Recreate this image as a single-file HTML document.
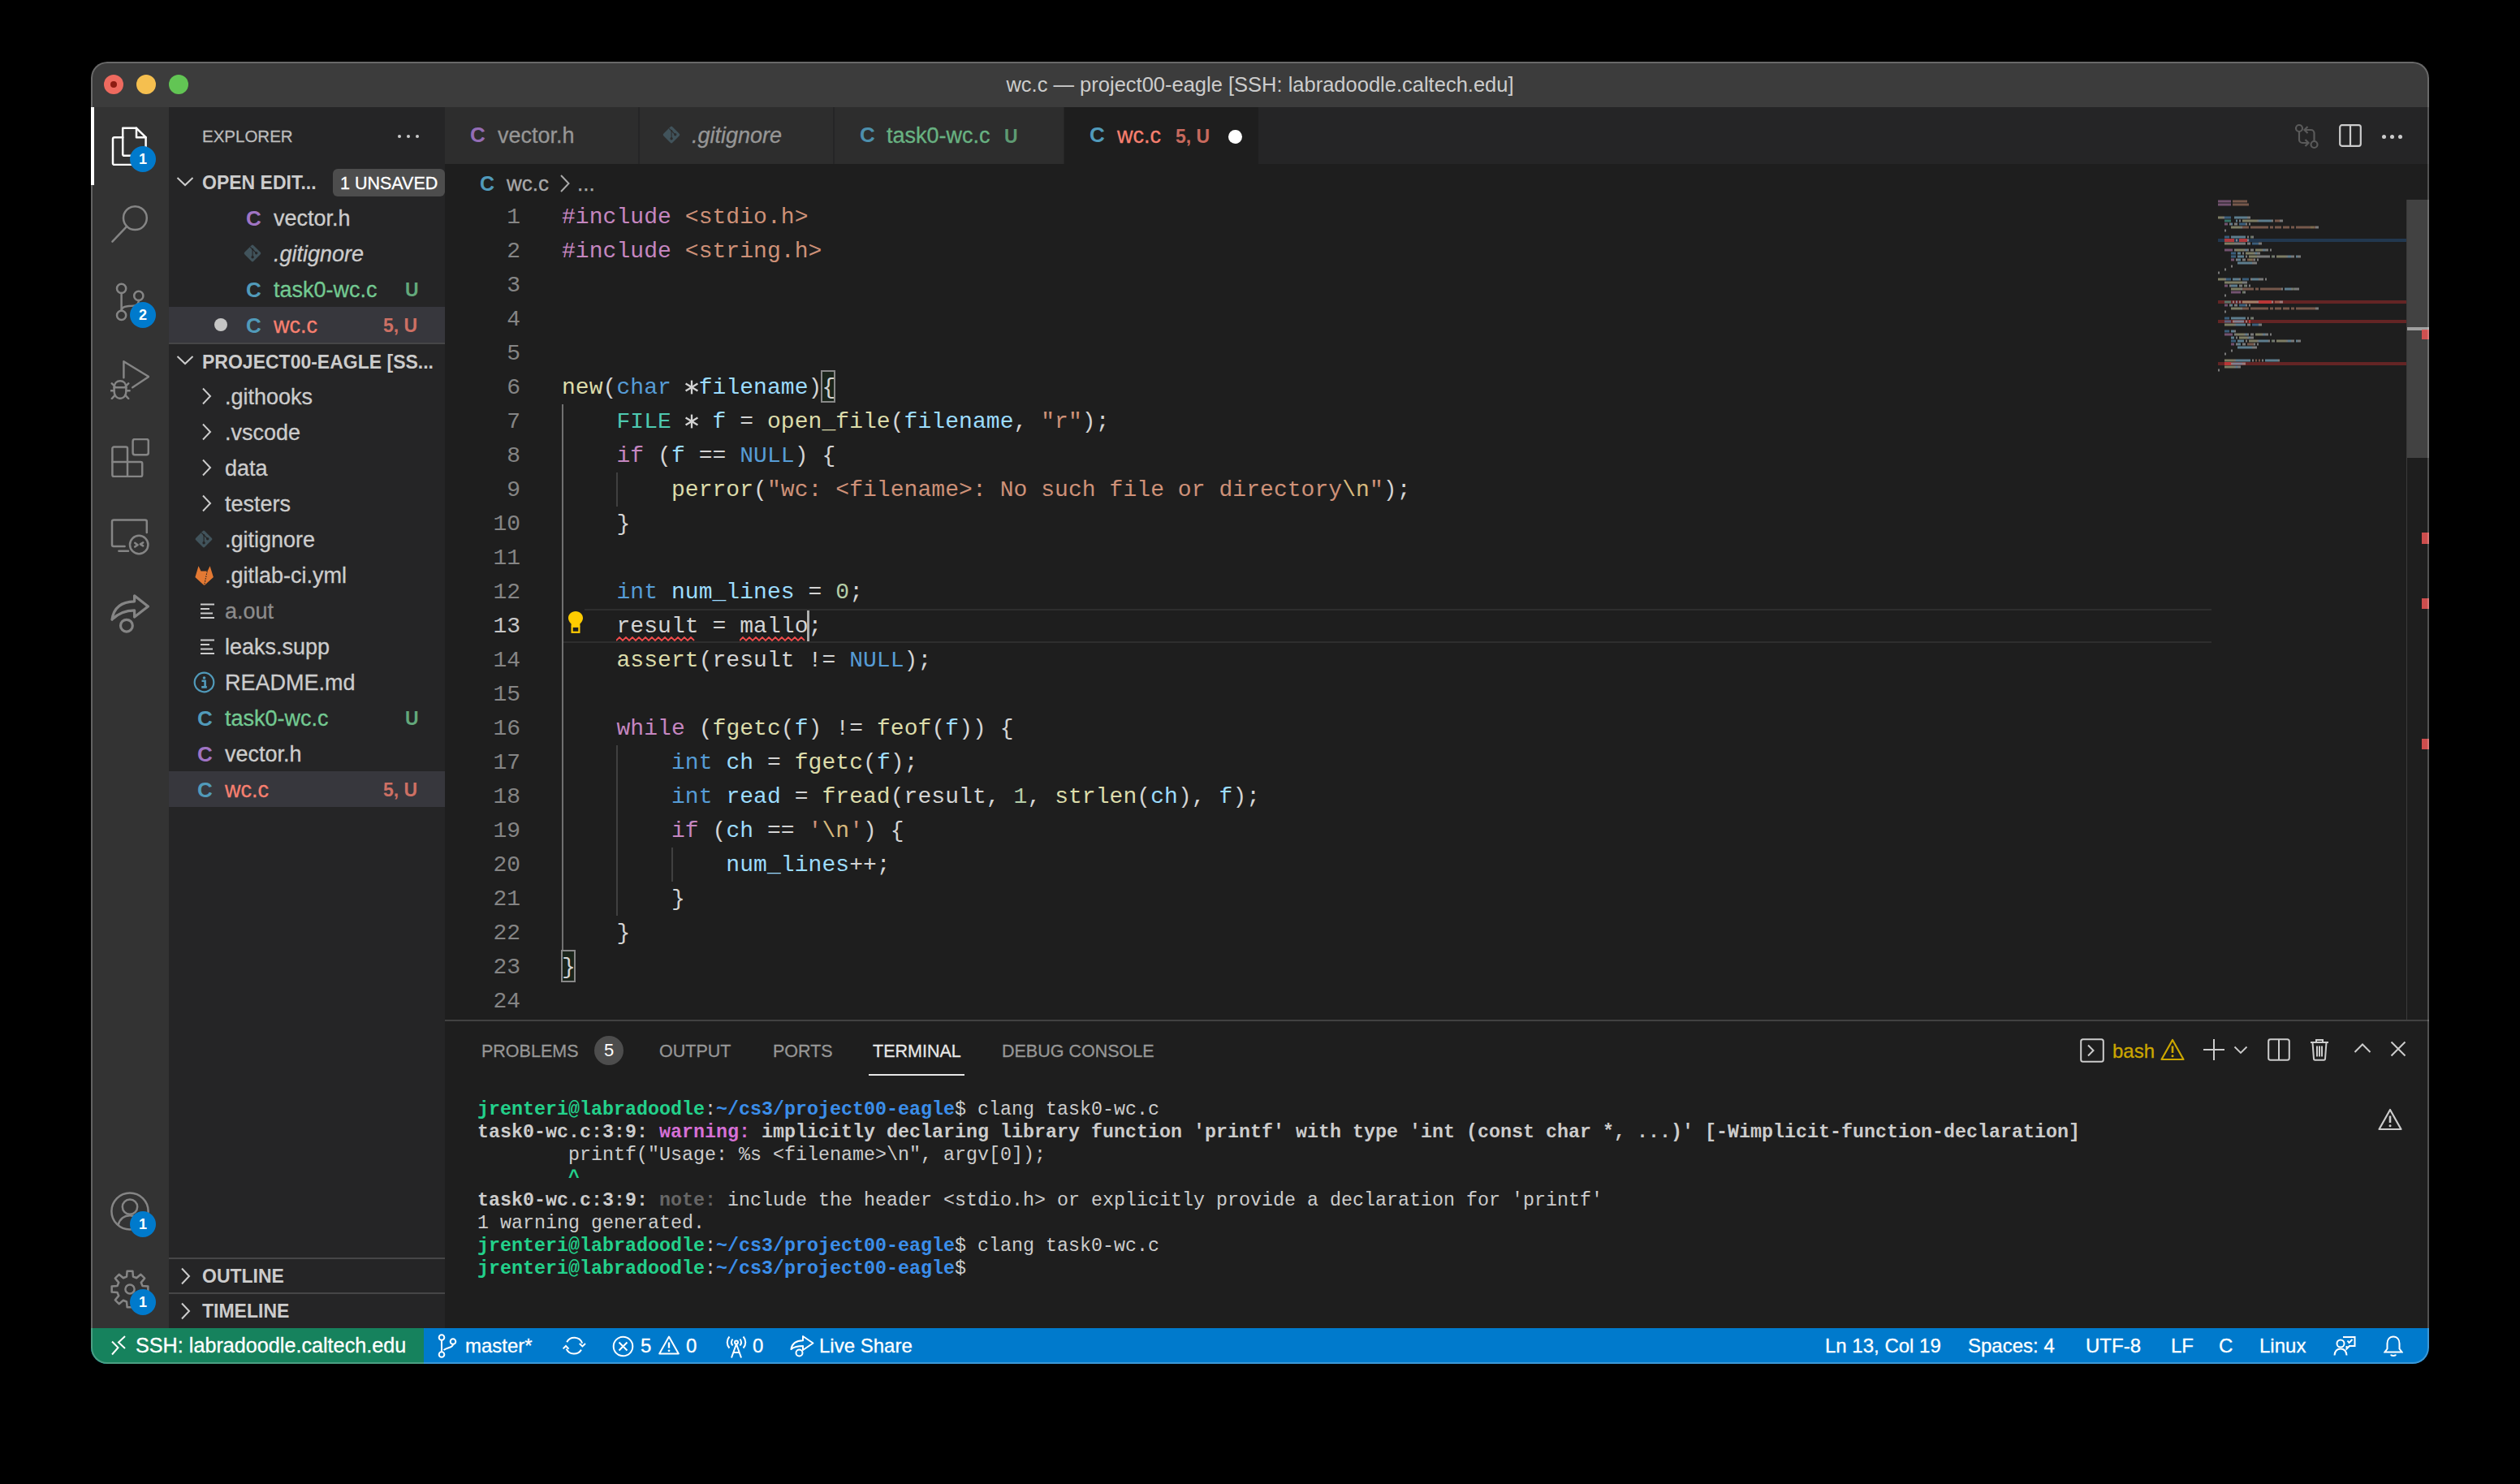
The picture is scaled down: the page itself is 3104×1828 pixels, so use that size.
<!DOCTYPE html>
<html><head><meta charset="utf-8"><title>VS Code</title>
<style>
html,body{margin:0;padding:0;background:#000;width:3104px;height:1828px;overflow:hidden;}
#win{position:absolute;left:0;top:0;width:3104px;height:1828px;clip-path:inset(76px 112px 148px 112px round 20px);}
</style></head><body>
<div id="win">
<div style="position:absolute;left:112px;top:76px;width:2880px;height:56px;background:#3c3c3c;"></div><div style="position:absolute;left:112px;top:132px;width:96px;height:1504px;background:#333333;"></div><div style="position:absolute;left:208px;top:132px;width:340px;height:1504px;background:#252526;"></div><div style="position:absolute;left:548px;top:132px;width:2444px;height:70px;background:#252526;"></div><div style="position:absolute;left:548px;top:202px;width:2444px;height:1054px;background:#1e1e1e;"></div><div style="position:absolute;left:548px;top:1256px;width:2444px;height:380px;background:#1e1e1e;"></div><div style="position:absolute;left:548px;top:1256px;width:2444px;height:2px;background:#414141;"></div><div style="position:absolute;left:112px;top:1636px;width:2880px;height:44px;background:#007acc;"></div><div style="position:absolute;left:112px;top:1636px;width:410px;height:44px;background:#16825d;"></div><div style="position:absolute;left:128px;top:92px;width:24px;height:24px;border-radius:50%;background:#ee6a5f;"></div><div style="position:absolute;left:168px;top:92px;width:24px;height:24px;border-radius:50%;background:#f5bf4f;"></div><div style="position:absolute;left:208px;top:92px;width:24px;height:24px;border-radius:50%;background:#62c554;"></div><div style="position:absolute;left:136px;top:100px;width:8px;height:8px;border-radius:50%;background:#8e1c12;"></div><div style="position:absolute;left:112px;top:76px;width:2880px;height:56px;text-align:center;font-family:'Liberation Sans', sans-serif;font-size:25.5px;line-height:56px;color:#cccccc;">wc.c — project00-eagle [SSH: labradoodle.caltech.edu]</div><div style="position:absolute;left:112px;top:76px;width:2880px;height:1604px;border-radius:20px;box-shadow:inset 0 0 0 2px rgba(255,255,255,0.23);z-index:50;pointer-events:none;"></div><div style="position:absolute;left:112px;top:132px;width:4px;height:96px;background:#ffffff;"></div><svg style="position:absolute;left:136px;top:156px;" width="48" height="48" viewBox="0 0 24 24"><g fill="none" stroke="#ffffff" stroke-width="1.25" stroke-linejoin="round" stroke-linecap="round"><path d="M7.6 0.9 H16 L21.8 6.6 V17 a0.9 0.9 0 0 1 -0.9 0.9 H8.5 a0.9 0.9 0 0 1 -0.9 -0.9 Z"/><path d="M16 0.9 V6.6 H21.8"/><path d="M7.6 6.6 H2.4 a0.9 0.9 0 0 0 -0.9 0.9 V22.6 a0.9 0.9 0 0 0 0.9 0.9 H14.6 a0.9 0.9 0 0 0 0.9 -0.9 V17.9"/></g></svg><svg style="position:absolute;left:136px;top:252px;" width="48" height="48" viewBox="0 0 24 24"><g fill="none" stroke="#858585" stroke-width="1.25" stroke-linejoin="round" stroke-linecap="round"><circle cx="15.2" cy="8.3" r="7.2"/><path d="M10.1 13.4 L1.2 22.8"/></g></svg><svg style="position:absolute;left:136px;top:348px;" width="48" height="48" viewBox="0 0 24 24"><g fill="none" stroke="#858585" stroke-width="1.25" stroke-linejoin="round" stroke-linecap="round"><circle cx="6.8" cy="3.7" r="2.8"/><circle cx="6.8" cy="20.2" r="2.8"/><circle cx="17.4" cy="8.2" r="2.8"/><path d="M6.8 6.5 V17.4"/><path d="M17.4 11 C17.4 14.6 14.5 14.4 10.5 14.6 C8.2 14.8 6.8 15.5 6.8 17.4"/></g></svg><svg style="position:absolute;left:136px;top:444px;" width="48" height="48" viewBox="0 0 24 24"><g fill="none" stroke="#858585" stroke-width="1.25" stroke-linejoin="round" stroke-linecap="round"><path d="M8.2 10.6 V0.6 L23.6 10 L13.6 16.6"/><path d="M2.3 16.8 C2.3 14 4 12.6 6 12.6 C8 12.6 9.7 14 9.7 16.8 V19 C9.7 21.8 8 23.4 6 23.4 C4 23.4 2.3 21.8 2.3 19 Z"/><path d="M2.3 16.6 H9.7 M0.2 18.6 H2.3 M9.7 18.6 H11.8 M0.9 14.2 L2.6 15.8 M11.1 14.2 L9.4 15.8 M0.9 23.5 L2.8 21.4 M11.1 23.5 L9.2 21.4"/></g></svg><svg style="position:absolute;left:136px;top:540px;" width="48" height="48" viewBox="0 0 24 24"><g fill="none" stroke="#858585" stroke-width="1.25" stroke-linejoin="round" stroke-linecap="round"><path d="M1.2 12.3 V6.3 a1 1 0 0 1 1 -1 H9.5 a1 1 0 0 1 1 1 V14.5 H18.6 a1 1 0 0 1 1 1 V22.5 a1 1 0 0 1 -1 1 H2.2 a1 1 0 0 1 -1 -1 Z"/><path d="M1.2 14.5 H10.5 V23.5"/><rect x="13.8" y="0.5" width="9.6" height="9.6" rx="1.2"/></g></svg><svg style="position:absolute;left:136px;top:636px;" width="48" height="48" viewBox="0 0 24 24"><g fill="none" stroke="#858585" stroke-width="1.25" stroke-linejoin="round" stroke-linecap="round"><path d="M8.8 18.5 H2 a1 1 0 0 1 -1 -1 V3.2 a1 1 0 0 1 1 -1 H21.4 a1 1 0 0 1 1 1 V10"/><path d="M5.2 21.4 H11"/><circle cx="17.6" cy="17.5" r="5.6"/><path d="M15.1 16.4 L16.8 17.6 L15.1 18.8 M20.1 16.2 L18.4 17.2 L20.1 18.2"/></g></svg><svg style="position:absolute;left:136px;top:732px;" width="48" height="48" viewBox="0 0 24 24"><g fill="none" stroke="#858585" stroke-width="1.25" stroke-linejoin="round" stroke-linecap="round"><g stroke-width="1.6"><path d="M1 15.6 C1.9 9 6 4.6 14.8 4.4 V0.9 L23.2 7.5 L14.8 14 V9.9 C8.5 9.9 4.6 11.8 1 15.6 Z"/><circle cx="9.95" cy="19.35" r="3.7"/></g></g></svg><svg style="position:absolute;left:136px;top:1468px;" width="48" height="48" viewBox="0 0 24 24"><g fill="none" stroke="#858585" stroke-width="1.25" stroke-linejoin="round" stroke-linecap="round"><circle cx="12" cy="12" r="11.3"/><circle cx="12" cy="9.3" r="4.6"/><path d="M4.8 20.4 C5.8 16.8 8.5 14.6 12 14.6 C15.5 14.6 18.2 16.8 19.2 20.4"/></g></svg><svg style="position:absolute;left:136px;top:1564px;" width="48" height="48" viewBox="0 0 24 24"><g fill="none" stroke="#858585" stroke-width="1.25" stroke-linejoin="round" stroke-linecap="round"><path d="M19.75 10.02 L23.17 10.31 L23.17 13.69 L19.75 13.98 L18.88 16.08 L21.09 18.71 L18.71 21.09 L16.08 18.88 L13.98 19.75 L13.69 23.17 L10.31 23.17 L10.02 19.75 L7.92 18.88 L5.29 21.09 L2.91 18.71 L5.12 16.08 L4.25 13.98 L0.83 13.69 L0.83 10.31 L4.25 10.02 L5.12 7.92 L2.91 5.29 L5.29 2.91 L7.92 5.12 L10.02 4.25 L10.31 0.83 L13.69 0.83 L13.98 4.25 L16.08 5.12 L18.71 2.91 L21.09 5.29 L18.88 7.92 Z"/><circle cx="12" cy="12" r="2.8"/></g></svg><div style="position:absolute;left:160px;top:180px;width:32px;height:32px;border-radius:50%;background:#007acc;color:#fff;font-family:'Liberation Sans', sans-serif;font-weight:bold;font-size:18px;line-height:32px;text-align:center;">1</div><div style="position:absolute;left:160px;top:372px;width:32px;height:32px;border-radius:50%;background:#007acc;color:#fff;font-family:'Liberation Sans', sans-serif;font-weight:bold;font-size:18px;line-height:32px;text-align:center;">2</div><div style="position:absolute;left:160px;top:1492px;width:32px;height:32px;border-radius:50%;background:#007acc;color:#fff;font-family:'Liberation Sans', sans-serif;font-weight:bold;font-size:18px;line-height:32px;text-align:center;">1</div><div style="position:absolute;left:160px;top:1588px;width:32px;height:32px;border-radius:50%;background:#007acc;color:#fff;font-family:'Liberation Sans', sans-serif;font-weight:bold;font-size:18px;line-height:32px;text-align:center;">1</div><div style="position:absolute;left:249px;top:150px;font-family:'Liberation Sans', sans-serif;font-size:20.5px;line-height:36px;color:#bbbbbb;font-weight:normal;white-space:pre;-webkit-text-stroke:0.3px currentColor;">EXPLORER</div><div style="position:absolute;left:490px;top:166px;width:4px;height:4px;border-radius:50%;background:#cccccc;"></div><div style="position:absolute;left:501px;top:166px;width:4px;height:4px;border-radius:50%;background:#cccccc;"></div><div style="position:absolute;left:512px;top:166px;width:4px;height:4px;border-radius:50%;background:#cccccc;"></div><svg style="position:absolute;left:217px;top:217px;" width="22" height="14" viewBox="0 0 22 14"><path d="M1.5 2 L11 11 L20.5 2" fill="none" stroke="#cccccc" stroke-width="2"/></svg><div style="position:absolute;left:249px;top:203px;font-family:'Liberation Sans', sans-serif;font-size:23px;line-height:44px;color:#cccccc;font-weight:bold;white-space:pre;">OPEN EDIT...</div><div style="position:absolute;left:410px;top:208px;width:138px;height:34px;border-radius:6px;background:#4d4d4d;"></div><div style="position:absolute;left:419px;top:209px;font-family:'Liberation Sans', sans-serif;font-size:21.5px;line-height:34px;color:#ffffff;font-weight:normal;white-space:pre;-webkit-text-stroke:0.3px currentColor;">1 UNSAVED</div><div style="position:absolute;left:303px;top:247px;font-family:'Liberation Sans', sans-serif;font-size:26px;line-height:44px;color:#a074c4;font-weight:bold;white-space:pre;">C</div><div style="position:absolute;left:337px;top:247px;font-family:'Liberation Sans', sans-serif;font-size:27px;line-height:44px;color:#cccccc;font-weight:normal;white-space:pre;-webkit-text-stroke:0.3px currentColor;">vector.h</div><svg style="position:absolute;left:299px;top:300px;" width="24" height="24" viewBox="0 0 24 24"><g transform="rotate(45 12 12)"><rect x="4.2" y="4.2" width="15.6" height="15.6" rx="1.8" fill="#41535b"/></g><path d="M9.2 4.3 L12.1 7 V16.8 M12.1 7 L16.7 11.8" stroke="#252526" stroke-width="1.1" fill="none"/><circle cx="12.1" cy="7" r="1.1" fill="#252526"/><circle cx="12.1" cy="16.8" r="1.7" fill="#252526"/><circle cx="16.7" cy="11.8" r="1.7" fill="#252526"/></svg><div style="position:absolute;left:337px;top:291px;font-family:'Liberation Sans', sans-serif;font-size:27px;line-height:44px;color:#cccccc;font-weight:normal;white-space:pre;-webkit-text-stroke:0.3px currentColor;font-style:italic;">.gitignore</div><div style="position:absolute;left:303px;top:335px;font-family:'Liberation Sans', sans-serif;font-size:26px;line-height:44px;color:#519aba;font-weight:bold;white-space:pre;">C</div><div style="position:absolute;left:337px;top:335px;font-family:'Liberation Sans', sans-serif;font-size:27px;line-height:44px;color:#73c991;font-weight:normal;white-space:pre;-webkit-text-stroke:0.3px currentColor;">task0-wc.c</div><div style="position:absolute;left:499px;top:335px;font-family:'Liberation Sans', sans-serif;font-size:23px;line-height:44px;color:#73c991;font-weight:bold;white-space:pre;opacity:0.8;">U</div><div style="position:absolute;left:208px;top:378px;width:340px;height:44px;background:#37373d;"></div><div style="position:absolute;left:264px;top:392px;width:16px;height:16px;border-radius:50%;background:#c5c5c5;"></div><div style="position:absolute;left:303px;top:379px;font-family:'Liberation Sans', sans-serif;font-size:26px;line-height:44px;color:#519aba;font-weight:bold;white-space:pre;">C</div><div style="position:absolute;left:337px;top:379px;font-family:'Liberation Sans', sans-serif;font-size:27px;line-height:44px;color:#f88070;font-weight:normal;white-space:pre;-webkit-text-stroke:0.3px currentColor;">wc.c</div><div style="position:absolute;left:472px;top:379px;font-family:'Liberation Sans', sans-serif;font-size:23px;line-height:44px;color:#f88070;font-weight:bold;white-space:pre;opacity:0.78;">5, U</div><div style="position:absolute;left:208px;top:422px;width:340px;height:2px;background:rgba(204,204,204,0.2);"></div><svg style="position:absolute;left:217px;top:437px;" width="22" height="14" viewBox="0 0 22 14"><path d="M1.5 2 L11 11 L20.5 2" fill="none" stroke="#cccccc" stroke-width="2"/></svg><div style="position:absolute;left:249px;top:423px;font-family:'Liberation Sans', sans-serif;font-size:23px;line-height:46px;color:#cccccc;font-weight:bold;white-space:pre;">PROJECT00-EAGLE [SS...</div><svg style="position:absolute;left:248px;top:477px;" width="14" height="22" viewBox="0 0 14 22"><path d="M2 1.5 L11 11 L2 20.5" fill="none" stroke="#cccccc" stroke-width="2"/></svg><div style="position:absolute;left:277px;top:467px;font-family:'Liberation Sans', sans-serif;font-size:27px;line-height:44px;color:#cccccc;font-weight:normal;white-space:pre;-webkit-text-stroke:0.3px currentColor;">.githooks</div><svg style="position:absolute;left:248px;top:521px;" width="14" height="22" viewBox="0 0 14 22"><path d="M2 1.5 L11 11 L2 20.5" fill="none" stroke="#cccccc" stroke-width="2"/></svg><div style="position:absolute;left:277px;top:511px;font-family:'Liberation Sans', sans-serif;font-size:27px;line-height:44px;color:#cccccc;font-weight:normal;white-space:pre;-webkit-text-stroke:0.3px currentColor;">.vscode</div><svg style="position:absolute;left:248px;top:565px;" width="14" height="22" viewBox="0 0 14 22"><path d="M2 1.5 L11 11 L2 20.5" fill="none" stroke="#cccccc" stroke-width="2"/></svg><div style="position:absolute;left:277px;top:555px;font-family:'Liberation Sans', sans-serif;font-size:27px;line-height:44px;color:#cccccc;font-weight:normal;white-space:pre;-webkit-text-stroke:0.3px currentColor;">data</div><svg style="position:absolute;left:248px;top:609px;" width="14" height="22" viewBox="0 0 14 22"><path d="M2 1.5 L11 11 L2 20.5" fill="none" stroke="#cccccc" stroke-width="2"/></svg><div style="position:absolute;left:277px;top:599px;font-family:'Liberation Sans', sans-serif;font-size:27px;line-height:44px;color:#cccccc;font-weight:normal;white-space:pre;-webkit-text-stroke:0.3px currentColor;">testers</div><svg style="position:absolute;left:239px;top:652px;" width="24" height="24" viewBox="0 0 24 24"><g transform="rotate(45 12 12)"><rect x="4.2" y="4.2" width="15.6" height="15.6" rx="1.8" fill="#41535b"/></g><path d="M9.2 4.3 L12.1 7 V16.8 M12.1 7 L16.7 11.8" stroke="#252526" stroke-width="1.1" fill="none"/><circle cx="12.1" cy="7" r="1.1" fill="#252526"/><circle cx="12.1" cy="16.8" r="1.7" fill="#252526"/><circle cx="16.7" cy="11.8" r="1.7" fill="#252526"/></svg><div style="position:absolute;left:277px;top:643px;font-family:'Liberation Sans', sans-serif;font-size:27px;line-height:44px;color:#cccccc;font-weight:normal;white-space:pre;-webkit-text-stroke:0.3px currentColor;">.gitignore</div><svg style="position:absolute;left:239px;top:697px;" width="26" height="26" viewBox="0 0 26 26"><path d="M1.4 14.1 L5.5 0.3 L8.5 6.4 H16.6 L19.6 0.3 L23.9 14.1 L12.6 24.2 Z" fill="#e37933"/><path d="M16.2 6.6 L12.6 24" stroke="#252526" stroke-width="1.1" stroke-dasharray="1.6 1.3"/></svg><div style="position:absolute;left:277px;top:687px;font-family:'Liberation Sans', sans-serif;font-size:27px;line-height:44px;color:#cccccc;font-weight:normal;white-space:pre;-webkit-text-stroke:0.3px currentColor;">.gitlab-ci.yml</div><svg style="position:absolute;left:246px;top:742px;" width="20" height="20" viewBox="0 0 20 20"><path d="M1 2.5 H18 M1 8 H12 M1 13.5 H16 M1 19 H18" stroke="#cccccc" stroke-width="2.2"/></svg><div style="position:absolute;left:277px;top:731px;font-family:'Liberation Sans', sans-serif;font-size:27px;line-height:44px;color:#8c8c8c;font-weight:normal;white-space:pre;-webkit-text-stroke:0.3px currentColor;">a.out</div><svg style="position:absolute;left:246px;top:786px;" width="20" height="20" viewBox="0 0 20 20"><path d="M1 2.5 H18 M1 8 H12 M1 13.5 H16 M1 19 H18" stroke="#cccccc" stroke-width="2.2"/></svg><div style="position:absolute;left:277px;top:775px;font-family:'Liberation Sans', sans-serif;font-size:27px;line-height:44px;color:#cccccc;font-weight:normal;white-space:pre;-webkit-text-stroke:0.3px currentColor;">leaks.supp</div><svg style="position:absolute;left:238px;top:827px;" width="27" height="27" viewBox="0 0 27 27"><circle cx="13.5" cy="13.5" r="11.8" fill="none" stroke="#519aba" stroke-width="2.2"/><circle cx="13.5" cy="8" r="1.8" fill="#519aba"/><path d="M10.5 11.8 H14.6 V18.8 M10.2 19.4 H16.8" stroke="#519aba" stroke-width="2.6" fill="none"/></svg><div style="position:absolute;left:277px;top:819px;font-family:'Liberation Sans', sans-serif;font-size:27px;line-height:44px;color:#cccccc;font-weight:normal;white-space:pre;-webkit-text-stroke:0.3px currentColor;">README.md</div><div style="position:absolute;left:243px;top:863px;font-family:'Liberation Sans', sans-serif;font-size:26px;line-height:44px;color:#519aba;font-weight:bold;white-space:pre;">C</div><div style="position:absolute;left:277px;top:863px;font-family:'Liberation Sans', sans-serif;font-size:27px;line-height:44px;color:#73c991;font-weight:normal;white-space:pre;-webkit-text-stroke:0.3px currentColor;">task0-wc.c</div><div style="position:absolute;left:499px;top:863px;font-family:'Liberation Sans', sans-serif;font-size:23px;line-height:44px;color:#73c991;font-weight:bold;white-space:pre;opacity:0.8;">U</div><div style="position:absolute;left:243px;top:907px;font-family:'Liberation Sans', sans-serif;font-size:26px;line-height:44px;color:#a074c4;font-weight:bold;white-space:pre;">C</div><div style="position:absolute;left:277px;top:907px;font-family:'Liberation Sans', sans-serif;font-size:27px;line-height:44px;color:#cccccc;font-weight:normal;white-space:pre;-webkit-text-stroke:0.3px currentColor;">vector.h</div><div style="position:absolute;left:208px;top:950px;width:340px;height:44px;background:#37373d;"></div><div style="position:absolute;left:243px;top:951px;font-family:'Liberation Sans', sans-serif;font-size:26px;line-height:44px;color:#519aba;font-weight:bold;white-space:pre;">C</div><div style="position:absolute;left:277px;top:951px;font-family:'Liberation Sans', sans-serif;font-size:27px;line-height:44px;color:#f88070;font-weight:normal;white-space:pre;-webkit-text-stroke:0.3px currentColor;">wc.c</div><div style="position:absolute;left:472px;top:951px;font-family:'Liberation Sans', sans-serif;font-size:23px;line-height:44px;color:#f88070;font-weight:bold;white-space:pre;opacity:0.78;">5, U</div><div style="position:absolute;left:208px;top:1549px;width:340px;height:2px;background:rgba(204,204,204,0.2);"></div><svg style="position:absolute;left:222px;top:1561px;" width="14" height="22" viewBox="0 0 14 22"><path d="M2 1.5 L11 11 L2 20.5" fill="none" stroke="#cccccc" stroke-width="2"/></svg><div style="position:absolute;left:249px;top:1551px;font-family:'Liberation Sans', sans-serif;font-size:23px;line-height:42px;color:#cccccc;font-weight:bold;white-space:pre;">OUTLINE</div><div style="position:absolute;left:208px;top:1592px;width:340px;height:2px;background:rgba(204,204,204,0.2);"></div><svg style="position:absolute;left:222px;top:1604px;" width="14" height="22" viewBox="0 0 14 22"><path d="M2 1.5 L11 11 L2 20.5" fill="none" stroke="#cccccc" stroke-width="2"/></svg><div style="position:absolute;left:249px;top:1594px;font-family:'Liberation Sans', sans-serif;font-size:23px;line-height:42px;color:#cccccc;font-weight:bold;white-space:pre;">TIMELINE</div><div style="position:absolute;left:548px;top:132px;width:238px;height:70px;background:#2d2d2d;"></div><div style="position:absolute;left:788px;top:132px;width:238px;height:70px;background:#2d2d2d;"></div><div style="position:absolute;left:1028px;top:132px;width:282px;height:70px;background:#2d2d2d;"></div><div style="position:absolute;left:1311px;top:132px;width:239px;height:70px;background:#1e1e1e;"></div><div style="position:absolute;left:579px;top:148px;font-family:'Liberation Sans', sans-serif;font-size:26px;line-height:36px;color:#a074c4;font-weight:bold;white-space:pre;opacity:0.9;">C</div><div style="position:absolute;left:613px;top:149px;font-family:'Liberation Sans', sans-serif;font-size:27px;line-height:36px;color:#969696;font-weight:normal;white-space:pre;-webkit-text-stroke:0.3px currentColor;">vector.h</div><svg style="position:absolute;left:815px;top:154px;" width="24" height="24" viewBox="0 0 24 24"><g transform="rotate(45 12 12)"><rect x="4.2" y="4.2" width="15.6" height="15.6" rx="1.8" fill="#41535b"/></g><path d="M9.2 4.3 L12.1 7 V16.8 M12.1 7 L16.7 11.8" stroke="#2d2d2d" stroke-width="1.1" fill="none"/><circle cx="12.1" cy="7" r="1.1" fill="#2d2d2d"/><circle cx="12.1" cy="16.8" r="1.7" fill="#2d2d2d"/><circle cx="16.7" cy="11.8" r="1.7" fill="#2d2d2d"/></svg><div style="position:absolute;left:852px;top:149px;font-family:'Liberation Sans', sans-serif;font-size:27px;line-height:36px;color:#969696;font-weight:normal;white-space:pre;-webkit-text-stroke:0.3px currentColor;font-style:italic;">.gitignore</div><div style="position:absolute;left:1059px;top:148px;font-family:'Liberation Sans', sans-serif;font-size:26px;line-height:36px;color:#519aba;font-weight:bold;white-space:pre;opacity:0.9;">C</div><div style="position:absolute;left:1092px;top:149px;font-family:'Liberation Sans', sans-serif;font-size:27px;line-height:36px;color:#73c991;font-weight:normal;white-space:pre;-webkit-text-stroke:0.3px currentColor;opacity:0.85;">task0-wc.c</div><div style="position:absolute;left:1237px;top:150px;font-family:'Liberation Sans', sans-serif;font-size:23px;line-height:36px;color:#73c991;font-weight:bold;white-space:pre;opacity:0.7;">U</div><div style="position:absolute;left:1342px;top:148px;font-family:'Liberation Sans', sans-serif;font-size:26px;line-height:36px;color:#519aba;font-weight:bold;white-space:pre;opacity:1.0;">C</div><div style="position:absolute;left:1376px;top:149px;font-family:'Liberation Sans', sans-serif;font-size:27px;line-height:36px;color:#f88070;font-weight:normal;white-space:pre;-webkit-text-stroke:0.3px currentColor;">wc.c</div><div style="position:absolute;left:1448px;top:150px;font-family:'Liberation Sans', sans-serif;font-size:23px;line-height:36px;color:#f88070;font-weight:bold;white-space:pre;opacity:0.78;">5, U</div><div style="position:absolute;left:1513px;top:160px;width:17px;height:17px;border-radius:50%;background:#ffffff;"></div><svg style="position:absolute;left:2826px;top:152px;" width="32" height="34" viewBox="0 0 32 34"><g fill="none" stroke="#5a5a5a" stroke-width="2.2"><circle cx="6" cy="6" r="4"/><circle cx="24.5" cy="26" r="4"/><path d="M6 10 V20 a4 4 0 0 0 4 4 H17 M13.5 20 L17.5 24 L13.5 28"/><path d="M24.5 22 V12 a4 4 0 0 0 -4 -4 H13 M16.5 4 L12.5 8 L16.5 12"/></g></svg><svg style="position:absolute;left:2881px;top:153px;" width="28" height="28" viewBox="0 0 28 28"><rect x="1.2" y="1.2" width="25.6" height="25.6" rx="2.5" fill="none" stroke="#cccccc" stroke-width="2.2"/><path d="M14 1.5 V26.5" stroke="#cccccc" stroke-width="2.2"/></svg><div style="position:absolute;left:2934px;top:166px;width:5px;height:5px;border-radius:50%;background:#cccccc;"></div><div style="position:absolute;left:2944px;top:166px;width:5px;height:5px;border-radius:50%;background:#cccccc;"></div><div style="position:absolute;left:2954px;top:166px;width:5px;height:5px;border-radius:50%;background:#cccccc;"></div><div style="position:absolute;left:591px;top:208px;font-family:'Liberation Sans', sans-serif;font-size:25px;line-height:36px;color:#519aba;font-weight:bold;white-space:pre;">C</div><div style="position:absolute;left:624px;top:208px;font-family:'Liberation Sans', sans-serif;font-size:26px;line-height:36px;color:#a9a9a9;font-weight:normal;white-space:pre;-webkit-text-stroke:0.3px currentColor;">wc.c</div><svg style="position:absolute;left:688px;top:214px;" width="16" height="24" viewBox="0 0 16 24"><path d="M3 2 L12.5 12 L3 22" fill="none" stroke="#a9a9a9" stroke-width="2"/></svg><div style="position:absolute;left:711px;top:208px;font-family:'Liberation Sans', sans-serif;font-size:26px;line-height:36px;color:#a9a9a9;font-weight:normal;white-space:pre;-webkit-text-stroke:0.3px currentColor;">...</div><div style="position:absolute;left:720px;top:750px;width:2004px;height:2px;background:#2e2e2e;"></div><div style="position:absolute;left:692px;top:790px;width:2032px;height:2px;background:#2e2e2e;"></div><div style="position:absolute;left:692px;top:498px;width:2px;height:672px;background:#707070;"></div><div style="position:absolute;left:759px;top:582px;width:2px;height:42px;background:#404040;"></div><div style="position:absolute;left:759px;top:918px;width:2px;height:210px;background:#404040;"></div><div style="position:absolute;left:827px;top:1044px;width:2px;height:42px;background:#404040;"></div><div style="position:absolute;left:1011px;top:456px;width:18px;height:40px;box-sizing:border-box;border:2px solid #888888;background:rgba(0,100,0,0.1);"></div><div style="position:absolute;left:691px;top:1170px;width:18px;height:40px;box-sizing:border-box;border:2px solid #888888;background:rgba(0,100,0,0.1);"></div><div style="position:absolute;left:560px;top:247px;width:81px;text-align:right;font-family:'Liberation Mono', monospace;font-size:28px;line-height:42px;color:#858585;white-space:pre;">1</div><div style="position:absolute;left:560px;top:289px;width:81px;text-align:right;font-family:'Liberation Mono', monospace;font-size:28px;line-height:42px;color:#858585;white-space:pre;">2</div><div style="position:absolute;left:560px;top:331px;width:81px;text-align:right;font-family:'Liberation Mono', monospace;font-size:28px;line-height:42px;color:#858585;white-space:pre;">3</div><div style="position:absolute;left:560px;top:373px;width:81px;text-align:right;font-family:'Liberation Mono', monospace;font-size:28px;line-height:42px;color:#858585;white-space:pre;">4</div><div style="position:absolute;left:560px;top:415px;width:81px;text-align:right;font-family:'Liberation Mono', monospace;font-size:28px;line-height:42px;color:#858585;white-space:pre;">5</div><div style="position:absolute;left:560px;top:457px;width:81px;text-align:right;font-family:'Liberation Mono', monospace;font-size:28px;line-height:42px;color:#858585;white-space:pre;">6</div><div style="position:absolute;left:560px;top:499px;width:81px;text-align:right;font-family:'Liberation Mono', monospace;font-size:28px;line-height:42px;color:#858585;white-space:pre;">7</div><div style="position:absolute;left:560px;top:541px;width:81px;text-align:right;font-family:'Liberation Mono', monospace;font-size:28px;line-height:42px;color:#858585;white-space:pre;">8</div><div style="position:absolute;left:560px;top:583px;width:81px;text-align:right;font-family:'Liberation Mono', monospace;font-size:28px;line-height:42px;color:#858585;white-space:pre;">9</div><div style="position:absolute;left:560px;top:625px;width:81px;text-align:right;font-family:'Liberation Mono', monospace;font-size:28px;line-height:42px;color:#858585;white-space:pre;">10</div><div style="position:absolute;left:560px;top:667px;width:81px;text-align:right;font-family:'Liberation Mono', monospace;font-size:28px;line-height:42px;color:#858585;white-space:pre;">11</div><div style="position:absolute;left:560px;top:709px;width:81px;text-align:right;font-family:'Liberation Mono', monospace;font-size:28px;line-height:42px;color:#858585;white-space:pre;">12</div><div style="position:absolute;left:560px;top:751px;width:81px;text-align:right;font-family:'Liberation Mono', monospace;font-size:28px;line-height:42px;color:#c6c6c6;white-space:pre;">13</div><div style="position:absolute;left:560px;top:793px;width:81px;text-align:right;font-family:'Liberation Mono', monospace;font-size:28px;line-height:42px;color:#858585;white-space:pre;">14</div><div style="position:absolute;left:560px;top:835px;width:81px;text-align:right;font-family:'Liberation Mono', monospace;font-size:28px;line-height:42px;color:#858585;white-space:pre;">15</div><div style="position:absolute;left:560px;top:877px;width:81px;text-align:right;font-family:'Liberation Mono', monospace;font-size:28px;line-height:42px;color:#858585;white-space:pre;">16</div><div style="position:absolute;left:560px;top:919px;width:81px;text-align:right;font-family:'Liberation Mono', monospace;font-size:28px;line-height:42px;color:#858585;white-space:pre;">17</div><div style="position:absolute;left:560px;top:961px;width:81px;text-align:right;font-family:'Liberation Mono', monospace;font-size:28px;line-height:42px;color:#858585;white-space:pre;">18</div><div style="position:absolute;left:560px;top:1003px;width:81px;text-align:right;font-family:'Liberation Mono', monospace;font-size:28px;line-height:42px;color:#858585;white-space:pre;">19</div><div style="position:absolute;left:560px;top:1045px;width:81px;text-align:right;font-family:'Liberation Mono', monospace;font-size:28px;line-height:42px;color:#858585;white-space:pre;">20</div><div style="position:absolute;left:560px;top:1087px;width:81px;text-align:right;font-family:'Liberation Mono', monospace;font-size:28px;line-height:42px;color:#858585;white-space:pre;">21</div><div style="position:absolute;left:560px;top:1129px;width:81px;text-align:right;font-family:'Liberation Mono', monospace;font-size:28px;line-height:42px;color:#858585;white-space:pre;">22</div><div style="position:absolute;left:560px;top:1171px;width:81px;text-align:right;font-family:'Liberation Mono', monospace;font-size:28px;line-height:42px;color:#858585;white-space:pre;">23</div><div style="position:absolute;left:560px;top:1213px;width:81px;text-align:right;font-family:'Liberation Mono', monospace;font-size:28px;line-height:42px;color:#858585;white-space:pre;">24</div><svg style="position:absolute;left:842px;top:467px;" width="20" height="20" viewBox="0 0 20 20"><g stroke="#d4d4d4" stroke-width="2.3" stroke-linecap="butt"><path d="M10 1.6 V18.4"/><path d="M2.6 5.6 L17.4 14.4"/><path d="M2.6 14.4 L17.4 5.6"/></g></svg><svg style="position:absolute;left:842px;top:509px;" width="20" height="20" viewBox="0 0 20 20"><g stroke="#d4d4d4" stroke-width="2.3" stroke-linecap="butt"><path d="M10 1.6 V18.4"/><path d="M2.6 5.6 L17.4 14.4"/><path d="M2.6 14.4 L17.4 5.6"/></g></svg><div style="position:absolute;left:692px;top:247px;font-family:'Liberation Mono', monospace;font-size:28px;letter-spacing:0.06px;line-height:42px;white-space:pre;"><span style="color:#c586c0">#include</span><span style="color:#d4d4d4"> </span><span style="color:#ce9178">&lt;stdio.h&gt;</span></div><div style="position:absolute;left:692px;top:289px;font-family:'Liberation Mono', monospace;font-size:28px;letter-spacing:0.06px;line-height:42px;white-space:pre;"><span style="color:#c586c0">#include</span><span style="color:#d4d4d4"> </span><span style="color:#ce9178">&lt;string.h&gt;</span></div><div style="position:absolute;left:692px;top:457px;font-family:'Liberation Mono', monospace;font-size:28px;letter-spacing:0.06px;line-height:42px;white-space:pre;"><span style="color:#dcdcaa">new</span><span style="color:#d4d4d4">(</span><span style="color:#569cd6">char</span><span style="color:#d4d4d4">  </span><span style="color:#9cdcfe">filename</span><span style="color:#d4d4d4">)</span><span style="color:#d4d4d4">{</span></div><div style="position:absolute;left:692px;top:499px;font-family:'Liberation Mono', monospace;font-size:28px;letter-spacing:0.06px;line-height:42px;white-space:pre;"><span style="color:#d4d4d4">    </span><span style="color:#4ec9b0">FILE</span><span style="color:#d4d4d4">   </span><span style="color:#9cdcfe">f</span><span style="color:#d4d4d4"> = </span><span style="color:#dcdcaa">open_file</span><span style="color:#d4d4d4">(</span><span style="color:#9cdcfe">filename</span><span style="color:#d4d4d4">, </span><span style="color:#ce9178">&quot;r&quot;</span><span style="color:#d4d4d4">);</span></div><div style="position:absolute;left:692px;top:541px;font-family:'Liberation Mono', monospace;font-size:28px;letter-spacing:0.06px;line-height:42px;white-space:pre;"><span style="color:#d4d4d4">    </span><span style="color:#c586c0">if</span><span style="color:#d4d4d4"> (</span><span style="color:#9cdcfe">f</span><span style="color:#d4d4d4"> == </span><span style="color:#569cd6">NULL</span><span style="color:#d4d4d4">) {</span></div><div style="position:absolute;left:692px;top:583px;font-family:'Liberation Mono', monospace;font-size:28px;letter-spacing:0.06px;line-height:42px;white-space:pre;"><span style="color:#d4d4d4">        </span><span style="color:#dcdcaa">perror</span><span style="color:#d4d4d4">(</span><span style="color:#ce9178">&quot;wc: &lt;filename&gt;: No such file or directory</span><span style="color:#d7ba7d">\n</span><span style="color:#ce9178">&quot;</span><span style="color:#d4d4d4">);</span></div><div style="position:absolute;left:692px;top:625px;font-family:'Liberation Mono', monospace;font-size:28px;letter-spacing:0.06px;line-height:42px;white-space:pre;"><span style="color:#d4d4d4">    }</span></div><div style="position:absolute;left:692px;top:709px;font-family:'Liberation Mono', monospace;font-size:28px;letter-spacing:0.06px;line-height:42px;white-space:pre;"><span style="color:#d4d4d4">    </span><span style="color:#569cd6">int</span><span style="color:#d4d4d4"> </span><span style="color:#9cdcfe">num_lines</span><span style="color:#d4d4d4"> = </span><span style="color:#b5cea8">0</span><span style="color:#d4d4d4">;</span></div><div style="position:absolute;left:692px;top:751px;font-family:'Liberation Mono', monospace;font-size:28px;letter-spacing:0.06px;line-height:42px;white-space:pre;"><span style="color:#d4d4d4">    result = mallo;</span></div><div style="position:absolute;left:692px;top:793px;font-family:'Liberation Mono', monospace;font-size:28px;letter-spacing:0.06px;line-height:42px;white-space:pre;"><span style="color:#d4d4d4">    </span><span style="color:#dcdcaa">assert</span><span style="color:#d4d4d4">(result != </span><span style="color:#569cd6">NULL</span><span style="color:#d4d4d4">);</span></div><div style="position:absolute;left:692px;top:877px;font-family:'Liberation Mono', monospace;font-size:28px;letter-spacing:0.06px;line-height:42px;white-space:pre;"><span style="color:#d4d4d4">    </span><span style="color:#c586c0">while</span><span style="color:#d4d4d4"> (</span><span style="color:#dcdcaa">fgetc</span><span style="color:#d4d4d4">(</span><span style="color:#9cdcfe">f</span><span style="color:#d4d4d4">) != </span><span style="color:#dcdcaa">feof</span><span style="color:#d4d4d4">(</span><span style="color:#9cdcfe">f</span><span style="color:#d4d4d4">)) {</span></div><div style="position:absolute;left:692px;top:919px;font-family:'Liberation Mono', monospace;font-size:28px;letter-spacing:0.06px;line-height:42px;white-space:pre;"><span style="color:#d4d4d4">        </span><span style="color:#569cd6">int</span><span style="color:#d4d4d4"> </span><span style="color:#9cdcfe">ch</span><span style="color:#d4d4d4"> = </span><span style="color:#dcdcaa">fgetc</span><span style="color:#d4d4d4">(</span><span style="color:#9cdcfe">f</span><span style="color:#d4d4d4">);</span></div><div style="position:absolute;left:692px;top:961px;font-family:'Liberation Mono', monospace;font-size:28px;letter-spacing:0.06px;line-height:42px;white-space:pre;"><span style="color:#d4d4d4">        </span><span style="color:#569cd6">int</span><span style="color:#d4d4d4"> </span><span style="color:#9cdcfe">read</span><span style="color:#d4d4d4"> = </span><span style="color:#dcdcaa">fread</span><span style="color:#d4d4d4">(result, </span><span style="color:#b5cea8">1</span><span style="color:#d4d4d4">, </span><span style="color:#dcdcaa">strlen</span><span style="color:#d4d4d4">(</span><span style="color:#9cdcfe">ch</span><span style="color:#d4d4d4">), </span><span style="color:#9cdcfe">f</span><span style="color:#d4d4d4">);</span></div><div style="position:absolute;left:692px;top:1003px;font-family:'Liberation Mono', monospace;font-size:28px;letter-spacing:0.06px;line-height:42px;white-space:pre;"><span style="color:#d4d4d4">        </span><span style="color:#c586c0">if</span><span style="color:#d4d4d4"> (</span><span style="color:#9cdcfe">ch</span><span style="color:#d4d4d4"> == </span><span style="color:#ce9178">&#x27;</span><span style="color:#d7ba7d">\n</span><span style="color:#ce9178">&#x27;</span><span style="color:#d4d4d4">) {</span></div><div style="position:absolute;left:692px;top:1045px;font-family:'Liberation Mono', monospace;font-size:28px;letter-spacing:0.06px;line-height:42px;white-space:pre;"><span style="color:#d4d4d4">            </span><span style="color:#9cdcfe">num_lines</span><span style="color:#d4d4d4">++;</span></div><div style="position:absolute;left:692px;top:1087px;font-family:'Liberation Mono', monospace;font-size:28px;letter-spacing:0.06px;line-height:42px;white-space:pre;"><span style="color:#d4d4d4">        }</span></div><div style="position:absolute;left:692px;top:1129px;font-family:'Liberation Mono', monospace;font-size:28px;letter-spacing:0.06px;line-height:42px;white-space:pre;"><span style="color:#d4d4d4">    }</span></div><div style="position:absolute;left:692px;top:1171px;font-family:'Liberation Mono', monospace;font-size:28px;letter-spacing:0.06px;line-height:42px;white-space:pre;"><span style="color:#d4d4d4">}</span></div><svg style="position:absolute;left:759px;top:784px;" width="102" height="8" viewBox="0 0 102 8"><path d="M0 5 l4 -4 l4 4 l4 -4 l4 4 l4 -4 l4 4 l4 -4 l4 4 l4 -4 l4 4 l4 -4 l4 4 l4 -4 l4 4 l4 -4 l4 4 l4 -4 l4 4 l4 -4 l4 4 l4 -4 l4 4 l4 -4 l4 4" fill="none" stroke="#f14c4c" stroke-width="1.8"/></svg><svg style="position:absolute;left:911px;top:784px;" width="84" height="8" viewBox="0 0 84 8"><path d="M0 5 l4 -4 l4 4 l4 -4 l4 4 l4 -4 l4 4 l4 -4 l4 4 l4 -4 l4 4 l4 -4 l4 4 l4 -4 l4 4 l4 -4 l4 4 l4 -4 l4 4 l4 -4 l4 4" fill="none" stroke="#f14c4c" stroke-width="1.8"/></svg><div style="position:absolute;left:994px;top:752px;width:3px;height:38px;background:#aeafad;"></div><svg style="position:absolute;left:699px;top:752px;" width="20" height="28" viewBox="0 0 20 28"><path d="M10 1 C4.8 1 1 4.8 1 9.3 C1 12.6 3 14.6 4.6 16.6 V19.5 H15.4 V16.6 C17 14.6 19 12.6 19 9.3 C19 4.8 15.2 1 10 1 Z" fill="#ffcc00"/><rect x="5.6" y="19.8" width="8.8" height="7" fill="none" stroke="#ffcc00" stroke-width="2.2"/></svg><div style="position:absolute;left:2732px;top:294px;width:232px;height:4px;background:#264f78;opacity:0.55;"></div><div style="position:absolute;left:2732px;top:370px;width:232px;height:4px;background:#8b2a2a;opacity:0.65;"></div><div style="position:absolute;left:2732px;top:394px;width:232px;height:4px;background:#8b2a2a;opacity:0.65;"></div><div style="position:absolute;left:2732px;top:446px;width:232px;height:4px;background:#8b2a2a;opacity:0.65;"></div><svg style="position:absolute;left:2732px;top:246px;" width="232" height="220" viewBox="0 0 232 220"><rect x="0" y="0.5" width="16" height="3" fill="#c586c0" opacity="0.5"/><rect x="18" y="0.5" width="18" height="3" fill="#ce9178" opacity="0.5"/><rect x="0" y="4.5" width="16" height="3" fill="#c586c0" opacity="0.5"/><rect x="18" y="4.5" width="20" height="3" fill="#ce9178" opacity="0.5"/><rect x="0" y="20.5" width="6" height="3" fill="#dcdcaa" opacity="0.5"/><rect x="6" y="20.5" width="2" height="3" fill="#d4d4d4" opacity="0.5"/><rect x="8" y="20.5" width="8" height="3" fill="#569cd6" opacity="0.5"/><rect x="20" y="20.5" width="16" height="3" fill="#9cdcfe" opacity="0.5"/><rect x="36" y="20.5" width="2" height="3" fill="#d4d4d4" opacity="0.5"/><rect x="38" y="20.5" width="2" height="3" fill="#d4d4d4" opacity="0.5"/><rect x="8" y="24.5" width="8" height="3" fill="#4ec9b0" opacity="0.5"/><rect x="22" y="24.5" width="2" height="3" fill="#9cdcfe" opacity="0.5"/><rect x="26" y="24.5" width="2" height="3" fill="#d4d4d4" opacity="0.5"/><rect x="30" y="24.5" width="18" height="3" fill="#dcdcaa" opacity="0.5"/><rect x="48" y="24.5" width="2" height="3" fill="#d4d4d4" opacity="0.5"/><rect x="50" y="24.5" width="16" height="3" fill="#9cdcfe" opacity="0.5"/><rect x="66" y="24.5" width="2" height="3" fill="#d4d4d4" opacity="0.5"/><rect x="70" y="24.5" width="6" height="3" fill="#ce9178" opacity="0.5"/><rect x="76" y="24.5" width="4" height="3" fill="#d4d4d4" opacity="0.5"/><rect x="8" y="28.5" width="4" height="3" fill="#c586c0" opacity="0.5"/><rect x="14" y="28.5" width="2" height="3" fill="#d4d4d4" opacity="0.5"/><rect x="16" y="28.5" width="2" height="3" fill="#9cdcfe" opacity="0.5"/><rect x="20" y="28.5" width="4" height="3" fill="#d4d4d4" opacity="0.5"/><rect x="26" y="28.5" width="8" height="3" fill="#569cd6" opacity="0.5"/><rect x="34" y="28.5" width="2" height="3" fill="#d4d4d4" opacity="0.5"/><rect x="38" y="28.5" width="2" height="3" fill="#d4d4d4" opacity="0.5"/><rect x="16" y="32.5" width="12" height="3" fill="#dcdcaa" opacity="0.5"/><rect x="28" y="32.5" width="2" height="3" fill="#d4d4d4" opacity="0.5"/><rect x="30" y="32.5" width="8" height="3" fill="#ce9178" opacity="0.5"/><rect x="40" y="32.5" width="22" height="3" fill="#ce9178" opacity="0.5"/><rect x="64" y="32.5" width="4" height="3" fill="#ce9178" opacity="0.5"/><rect x="70" y="32.5" width="8" height="3" fill="#ce9178" opacity="0.5"/><rect x="80" y="32.5" width="8" height="3" fill="#ce9178" opacity="0.5"/><rect x="90" y="32.5" width="4" height="3" fill="#ce9178" opacity="0.5"/><rect x="96" y="32.5" width="18" height="3" fill="#ce9178" opacity="0.5"/><rect x="114" y="32.5" width="4" height="3" fill="#d7ba7d" opacity="0.5"/><rect x="118" y="32.5" width="2" height="3" fill="#ce9178" opacity="0.5"/><rect x="120" y="32.5" width="4" height="3" fill="#d4d4d4" opacity="0.5"/><rect x="8" y="36.5" width="2" height="3" fill="#d4d4d4" opacity="0.5"/><rect x="8" y="44.5" width="6" height="3" fill="#569cd6" opacity="0.5"/><rect x="16" y="44.5" width="18" height="3" fill="#9cdcfe" opacity="0.5"/><rect x="36" y="44.5" width="2" height="3" fill="#d4d4d4" opacity="0.5"/><rect x="40" y="44.5" width="2" height="3" fill="#b5cea8" opacity="0.5"/><rect x="42" y="44.5" width="2" height="3" fill="#d4d4d4" opacity="0.5"/><rect x="8" y="48" width="12" height="4" fill="#c93a3a" opacity="0.85"/><rect x="22" y="48.5" width="2" height="3" fill="#d4d4d4" opacity="0.5"/><rect x="26" y="48" width="10" height="4" fill="#c93a3a" opacity="0.85"/><rect x="36" y="48.5" width="2" height="3" fill="#d4d4d4" opacity="0.5"/><rect x="8" y="52.5" width="12" height="3" fill="#dcdcaa" opacity="0.5"/><rect x="20" y="52.5" width="14" height="3" fill="#d4d4d4" opacity="0.5"/><rect x="36" y="52.5" width="4" height="3" fill="#d4d4d4" opacity="0.5"/><rect x="42" y="52.5" width="8" height="3" fill="#569cd6" opacity="0.5"/><rect x="50" y="52.5" width="4" height="3" fill="#d4d4d4" opacity="0.5"/><rect x="8" y="60.5" width="10" height="3" fill="#c586c0" opacity="0.5"/><rect x="20" y="60.5" width="2" height="3" fill="#d4d4d4" opacity="0.5"/><rect x="22" y="60.5" width="10" height="3" fill="#dcdcaa" opacity="0.5"/><rect x="32" y="60.5" width="2" height="3" fill="#d4d4d4" opacity="0.5"/><rect x="34" y="60.5" width="2" height="3" fill="#9cdcfe" opacity="0.5"/><rect x="36" y="60.5" width="2" height="3" fill="#d4d4d4" opacity="0.5"/><rect x="40" y="60.5" width="4" height="3" fill="#d4d4d4" opacity="0.5"/><rect x="46" y="60.5" width="8" height="3" fill="#dcdcaa" opacity="0.5"/><rect x="54" y="60.5" width="2" height="3" fill="#d4d4d4" opacity="0.5"/><rect x="56" y="60.5" width="2" height="3" fill="#9cdcfe" opacity="0.5"/><rect x="58" y="60.5" width="4" height="3" fill="#d4d4d4" opacity="0.5"/><rect x="64" y="60.5" width="2" height="3" fill="#d4d4d4" opacity="0.5"/><rect x="16" y="64.5" width="6" height="3" fill="#569cd6" opacity="0.5"/><rect x="24" y="64.5" width="4" height="3" fill="#9cdcfe" opacity="0.5"/><rect x="30" y="64.5" width="2" height="3" fill="#d4d4d4" opacity="0.5"/><rect x="34" y="64.5" width="10" height="3" fill="#dcdcaa" opacity="0.5"/><rect x="44" y="64.5" width="2" height="3" fill="#d4d4d4" opacity="0.5"/><rect x="46" y="64.5" width="2" height="3" fill="#9cdcfe" opacity="0.5"/><rect x="48" y="64.5" width="4" height="3" fill="#d4d4d4" opacity="0.5"/><rect x="16" y="68.5" width="6" height="3" fill="#569cd6" opacity="0.5"/><rect x="24" y="68.5" width="8" height="3" fill="#9cdcfe" opacity="0.5"/><rect x="34" y="68.5" width="2" height="3" fill="#d4d4d4" opacity="0.5"/><rect x="38" y="68.5" width="10" height="3" fill="#dcdcaa" opacity="0.5"/><rect x="48" y="68.5" width="16" height="3" fill="#d4d4d4" opacity="0.5"/><rect x="66" y="68.5" width="2" height="3" fill="#b5cea8" opacity="0.5"/><rect x="68" y="68.5" width="2" height="3" fill="#d4d4d4" opacity="0.5"/><rect x="72" y="68.5" width="12" height="3" fill="#dcdcaa" opacity="0.5"/><rect x="84" y="68.5" width="2" height="3" fill="#d4d4d4" opacity="0.5"/><rect x="86" y="68.5" width="4" height="3" fill="#9cdcfe" opacity="0.5"/><rect x="90" y="68.5" width="4" height="3" fill="#d4d4d4" opacity="0.5"/><rect x="96" y="68.5" width="2" height="3" fill="#9cdcfe" opacity="0.5"/><rect x="98" y="68.5" width="4" height="3" fill="#d4d4d4" opacity="0.5"/><rect x="16" y="72.5" width="4" height="3" fill="#c586c0" opacity="0.5"/><rect x="22" y="72.5" width="2" height="3" fill="#d4d4d4" opacity="0.5"/><rect x="24" y="72.5" width="4" height="3" fill="#9cdcfe" opacity="0.5"/><rect x="30" y="72.5" width="4" height="3" fill="#d4d4d4" opacity="0.5"/><rect x="36" y="72.5" width="2" height="3" fill="#ce9178" opacity="0.5"/><rect x="38" y="72.5" width="4" height="3" fill="#d7ba7d" opacity="0.5"/><rect x="42" y="72.5" width="2" height="3" fill="#ce9178" opacity="0.5"/><rect x="44" y="72.5" width="2" height="3" fill="#d4d4d4" opacity="0.5"/><rect x="48" y="72.5" width="2" height="3" fill="#d4d4d4" opacity="0.5"/><rect x="24" y="76.5" width="18" height="3" fill="#9cdcfe" opacity="0.5"/><rect x="42" y="76.5" width="6" height="3" fill="#d4d4d4" opacity="0.5"/><rect x="16" y="80.5" width="2" height="3" fill="#d4d4d4" opacity="0.5"/><rect x="8" y="84.5" width="2" height="3" fill="#d4d4d4" opacity="0.5"/><rect x="0" y="88.5" width="2" height="3" fill="#d4d4d4" opacity="0.5"/><rect x="0" y="96.5" width="8" height="3" fill="#dcdcaa" opacity="0.5"/><rect x="8" y="96.5" width="2" height="3" fill="#d4d4d4" opacity="0.5"/><rect x="10" y="96.5" width="6" height="3" fill="#569cd6" opacity="0.5"/><rect x="18" y="96.5" width="8" height="3" fill="#9cdcfe" opacity="0.5"/><rect x="26" y="96.5" width="2" height="3" fill="#d4d4d4" opacity="0.5"/><rect x="30" y="96.5" width="8" height="3" fill="#569cd6" opacity="0.5"/><rect x="40" y="96.5" width="2" height="3" fill="#d4d4d4" opacity="0.5"/><rect x="42" y="96.5" width="8" height="3" fill="#9cdcfe" opacity="0.5"/><rect x="50" y="96.5" width="6" height="3" fill="#d4d4d4" opacity="0.5"/><rect x="58" y="96.5" width="2" height="3" fill="#d4d4d4" opacity="0.5"/><rect x="8" y="100.5" width="22" height="3" fill="#dcdcaa" opacity="0.5"/><rect x="30" y="100.5" width="6" height="3" fill="#d4d4d4" opacity="0.5"/><rect x="8" y="104.5" width="4" height="3" fill="#c586c0" opacity="0.5"/><rect x="14" y="104.5" width="2" height="3" fill="#d4d4d4" opacity="0.5"/><rect x="16" y="104.5" width="8" height="3" fill="#9cdcfe" opacity="0.5"/><rect x="26" y="104.5" width="4" height="3" fill="#d4d4d4" opacity="0.5"/><rect x="32" y="104.5" width="2" height="3" fill="#b5cea8" opacity="0.5"/><rect x="34" y="104.5" width="2" height="3" fill="#d4d4d4" opacity="0.5"/><rect x="38" y="104.5" width="2" height="3" fill="#d4d4d4" opacity="0.5"/><rect x="16" y="108.5" width="12" height="3" fill="#dcdcaa" opacity="0.5"/><rect x="28" y="108.5" width="2" height="3" fill="#d4d4d4" opacity="0.5"/><rect x="30" y="108.5" width="14" height="3" fill="#ce9178" opacity="0.5"/><rect x="46" y="108.5" width="4" height="3" fill="#ce9178" opacity="0.5"/><rect x="52" y="108.5" width="26" height="3" fill="#ce9178" opacity="0.5"/><rect x="78" y="108.5" width="2" height="3" fill="#d4d4d4" opacity="0.5"/><rect x="82" y="108.5" width="8" height="3" fill="#9cdcfe" opacity="0.5"/><rect x="90" y="108.5" width="2" height="3" fill="#d4d4d4" opacity="0.5"/><rect x="92" y="108.5" width="2" height="3" fill="#b5cea8" opacity="0.5"/><rect x="94" y="108.5" width="6" height="3" fill="#d4d4d4" opacity="0.5"/><rect x="16" y="112.5" width="12" height="3" fill="#c586c0" opacity="0.5"/><rect x="30" y="112.5" width="2" height="3" fill="#b5cea8" opacity="0.5"/><rect x="32" y="112.5" width="2" height="3" fill="#d4d4d4" opacity="0.5"/><rect x="8" y="116.5" width="2" height="3" fill="#d4d4d4" opacity="0.5"/><rect x="8" y="124.5" width="8" height="3" fill="#4ec9b0" opacity="0.5"/><rect x="18" y="124.5" width="2" height="3" fill="#d4d4d4" opacity="0.5"/><rect x="22" y="124.5" width="2" height="3" fill="#9cdcfe" opacity="0.5"/><rect x="26" y="124.5" width="2" height="3" fill="#d4d4d4" opacity="0.5"/><rect x="30" y="124.5" width="18" height="3" fill="#dcdcaa" opacity="0.5"/><rect x="48" y="124.5" width="2" height="3" fill="#d4d4d4" opacity="0.5"/><rect x="50" y="124" width="16" height="4" fill="#c93a3a" opacity="0.85"/><rect x="66" y="124.5" width="2" height="3" fill="#d4d4d4" opacity="0.5"/><rect x="70" y="124.5" width="6" height="3" fill="#ce9178" opacity="0.5"/><rect x="76" y="124.5" width="4" height="3" fill="#d4d4d4" opacity="0.5"/><rect x="8" y="128.5" width="4" height="3" fill="#c586c0" opacity="0.5"/><rect x="14" y="128.5" width="2" height="3" fill="#d4d4d4" opacity="0.5"/><rect x="16" y="128.5" width="2" height="3" fill="#9cdcfe" opacity="0.5"/><rect x="20" y="128.5" width="4" height="3" fill="#d4d4d4" opacity="0.5"/><rect x="26" y="128.5" width="8" height="3" fill="#569cd6" opacity="0.5"/><rect x="34" y="128.5" width="2" height="3" fill="#d4d4d4" opacity="0.5"/><rect x="38" y="128.5" width="2" height="3" fill="#d4d4d4" opacity="0.5"/><rect x="16" y="132.5" width="12" height="3" fill="#dcdcaa" opacity="0.5"/><rect x="28" y="132.5" width="2" height="3" fill="#d4d4d4" opacity="0.5"/><rect x="30" y="132.5" width="8" height="3" fill="#ce9178" opacity="0.5"/><rect x="40" y="132.5" width="22" height="3" fill="#ce9178" opacity="0.5"/><rect x="64" y="132.5" width="4" height="3" fill="#ce9178" opacity="0.5"/><rect x="70" y="132.5" width="8" height="3" fill="#ce9178" opacity="0.5"/><rect x="80" y="132.5" width="8" height="3" fill="#ce9178" opacity="0.5"/><rect x="90" y="132.5" width="4" height="3" fill="#ce9178" opacity="0.5"/><rect x="96" y="132.5" width="24" height="3" fill="#ce9178" opacity="0.5"/><rect x="120" y="132.5" width="4" height="3" fill="#d4d4d4" opacity="0.5"/><rect x="8" y="136.5" width="2" height="3" fill="#d4d4d4" opacity="0.5"/><rect x="8" y="144.5" width="6" height="3" fill="#569cd6" opacity="0.5"/><rect x="16" y="144.5" width="18" height="3" fill="#9cdcfe" opacity="0.5"/><rect x="36" y="144.5" width="2" height="3" fill="#d4d4d4" opacity="0.5"/><rect x="40" y="144.5" width="2" height="3" fill="#b5cea8" opacity="0.5"/><rect x="42" y="144.5" width="2" height="3" fill="#d4d4d4" opacity="0.5"/><rect x="8" y="148.5" width="8" height="3" fill="#569cd6" opacity="0.5"/><rect x="18" y="148.5" width="2" height="3" fill="#d4d4d4" opacity="0.5"/><rect x="20" y="148.5" width="12" height="3" fill="#9cdcfe" opacity="0.5"/><rect x="34" y="148.5" width="2" height="3" fill="#d4d4d4" opacity="0.5"/><rect x="38" y="148" width="2" height="4" fill="#c93a3a" opacity="0.85"/><rect x="8" y="152.5" width="12" height="3" fill="#dcdcaa" opacity="0.5"/><rect x="20" y="152.5" width="2" height="3" fill="#d4d4d4" opacity="0.5"/><rect x="22" y="152.5" width="12" height="3" fill="#9cdcfe" opacity="0.5"/><rect x="36" y="152.5" width="4" height="3" fill="#d4d4d4" opacity="0.5"/><rect x="42" y="152.5" width="8" height="3" fill="#569cd6" opacity="0.5"/><rect x="50" y="152.5" width="4" height="3" fill="#d4d4d4" opacity="0.5"/><rect x="8" y="160.5" width="6" height="3" fill="#569cd6" opacity="0.5"/><rect x="16" y="160.5" width="4" height="3" fill="#9cdcfe" opacity="0.5"/><rect x="20" y="160.5" width="2" height="3" fill="#d4d4d4" opacity="0.5"/><rect x="8" y="164.5" width="10" height="3" fill="#c586c0" opacity="0.5"/><rect x="20" y="164.5" width="2" height="3" fill="#d4d4d4" opacity="0.5"/><rect x="22" y="164.5" width="10" height="3" fill="#dcdcaa" opacity="0.5"/><rect x="32" y="164.5" width="2" height="3" fill="#d4d4d4" opacity="0.5"/><rect x="34" y="164.5" width="2" height="3" fill="#9cdcfe" opacity="0.5"/><rect x="36" y="164.5" width="2" height="3" fill="#d4d4d4" opacity="0.5"/><rect x="40" y="164.5" width="4" height="3" fill="#d4d4d4" opacity="0.5"/><rect x="46" y="164.5" width="8" height="3" fill="#dcdcaa" opacity="0.5"/><rect x="54" y="164.5" width="2" height="3" fill="#d4d4d4" opacity="0.5"/><rect x="56" y="164.5" width="2" height="3" fill="#9cdcfe" opacity="0.5"/><rect x="58" y="164.5" width="4" height="3" fill="#d4d4d4" opacity="0.5"/><rect x="64" y="164.5" width="2" height="3" fill="#d4d4d4" opacity="0.5"/><rect x="16" y="168.5" width="4" height="3" fill="#9cdcfe" opacity="0.5"/><rect x="22" y="168.5" width="2" height="3" fill="#d4d4d4" opacity="0.5"/><rect x="26" y="168.5" width="10" height="3" fill="#dcdcaa" opacity="0.5"/><rect x="36" y="168.5" width="2" height="3" fill="#d4d4d4" opacity="0.5"/><rect x="38" y="168.5" width="2" height="3" fill="#9cdcfe" opacity="0.5"/><rect x="40" y="168.5" width="4" height="3" fill="#d4d4d4" opacity="0.5"/><rect x="16" y="172.5" width="6" height="3" fill="#569cd6" opacity="0.5"/><rect x="24" y="172.5" width="8" height="3" fill="#9cdcfe" opacity="0.5"/><rect x="34" y="172.5" width="2" height="3" fill="#d4d4d4" opacity="0.5"/><rect x="38" y="172.5" width="10" height="3" fill="#dcdcaa" opacity="0.5"/><rect x="48" y="172.5" width="2" height="3" fill="#d4d4d4" opacity="0.5"/><rect x="50" y="172.5" width="12" height="3" fill="#9cdcfe" opacity="0.5"/><rect x="62" y="172.5" width="2" height="3" fill="#d4d4d4" opacity="0.5"/><rect x="66" y="172.5" width="2" height="3" fill="#b5cea8" opacity="0.5"/><rect x="68" y="172.5" width="2" height="3" fill="#d4d4d4" opacity="0.5"/><rect x="72" y="172.5" width="12" height="3" fill="#dcdcaa" opacity="0.5"/><rect x="84" y="172.5" width="2" height="3" fill="#d4d4d4" opacity="0.5"/><rect x="86" y="172.5" width="4" height="3" fill="#9cdcfe" opacity="0.5"/><rect x="90" y="172.5" width="4" height="3" fill="#d4d4d4" opacity="0.5"/><rect x="96" y="172.5" width="2" height="3" fill="#9cdcfe" opacity="0.5"/><rect x="98" y="172.5" width="4" height="3" fill="#d4d4d4" opacity="0.5"/><rect x="16" y="176.5" width="4" height="3" fill="#c586c0" opacity="0.5"/><rect x="22" y="176.5" width="2" height="3" fill="#d4d4d4" opacity="0.5"/><rect x="24" y="176.5" width="4" height="3" fill="#9cdcfe" opacity="0.5"/><rect x="30" y="176.5" width="4" height="3" fill="#d4d4d4" opacity="0.5"/><rect x="36" y="176.5" width="8" height="3" fill="#ce9178" opacity="0.5"/><rect x="44" y="176.5" width="2" height="3" fill="#d4d4d4" opacity="0.5"/><rect x="48" y="176.5" width="2" height="3" fill="#d4d4d4" opacity="0.5"/><rect x="24" y="180.5" width="18" height="3" fill="#9cdcfe" opacity="0.5"/><rect x="42" y="180.5" width="6" height="3" fill="#d4d4d4" opacity="0.5"/><rect x="16" y="184.5" width="2" height="3" fill="#d4d4d4" opacity="0.5"/><rect x="8" y="188.5" width="2" height="3" fill="#d4d4d4" opacity="0.5"/><rect x="8" y="196.5" width="12" height="3" fill="#dcdcaa" opacity="0.5"/><rect x="20" y="196.5" width="2" height="3" fill="#d4d4d4" opacity="0.5"/><rect x="22" y="196.5" width="18" height="3" fill="#9cdcfe" opacity="0.5"/><rect x="42" y="196.5" width="2" height="3" fill="#d4d4d4" opacity="0.5"/><rect x="46" y="196.5" width="2" height="3" fill="#ce9178" opacity="0.5"/><rect x="50" y="196.5" width="2" height="3" fill="#ce9178" opacity="0.5"/><rect x="54" y="196.5" width="2" height="3" fill="#d4d4d4" opacity="0.5"/><rect x="58" y="196.5" width="16" height="3" fill="#9cdcfe" opacity="0.5"/><rect x="74" y="196.5" width="2" height="3" fill="#d4d4d4" opacity="0.5"/><rect x="8" y="200" width="8" height="4" fill="#c93a3a" opacity="0.85"/><rect x="16" y="200.5" width="2" height="3" fill="#d4d4d4" opacity="0.5"/><rect x="18" y="200.5" width="12" height="3" fill="#9cdcfe" opacity="0.5"/><rect x="30" y="200.5" width="4" height="3" fill="#d4d4d4" opacity="0.5"/><rect x="8" y="204.5" width="12" height="3" fill="#dcdcaa" opacity="0.5"/><rect x="20" y="204.5" width="2" height="3" fill="#d4d4d4" opacity="0.5"/><rect x="22" y="204.5" width="2" height="3" fill="#9cdcfe" opacity="0.5"/><rect x="24" y="204.5" width="4" height="3" fill="#d4d4d4" opacity="0.5"/><rect x="0" y="208.5" width="2" height="3" fill="#d4d4d4" opacity="0.5"/></svg><div style="position:absolute;left:2964px;top:246px;width:1px;height:1010px;background:rgba(127,127,127,0.3);"></div><div style="position:absolute;left:2965px;top:246px;width:27px;height:318px;background:rgba(121,121,121,0.4);"></div><div style="position:absolute;left:2965px;top:403px;width:27px;height:4px;background:#a0a0a0;"></div><div style="position:absolute;left:2983px;top:406px;width:9px;height:12px;background:#e05252;opacity:0.9;"></div><div style="position:absolute;left:2983px;top:656px;width:9px;height:14px;background:#e05252;opacity:0.9;"></div><div style="position:absolute;left:2983px;top:737px;width:9px;height:13px;background:#e05252;opacity:0.9;"></div><div style="position:absolute;left:2983px;top:910px;width:9px;height:13px;background:#e05252;opacity:0.9;"></div><div style="position:absolute;left:593px;top:1281px;font-family:'Liberation Sans', sans-serif;font-size:21.5px;line-height:28px;color:#969696;font-weight:normal;white-space:pre;-webkit-text-stroke:0.3px currentColor;">PROBLEMS</div><div style="position:absolute;left:732px;top:1276px;width:36px;height:36px;border-radius:50%;background:#4d4d4d;color:#ffffff;font-family:'Liberation Sans', sans-serif;font-size:22px;line-height:36px;text-align:center;">5</div><div style="position:absolute;left:812px;top:1281px;font-family:'Liberation Sans', sans-serif;font-size:21.5px;line-height:28px;color:#969696;font-weight:normal;white-space:pre;-webkit-text-stroke:0.3px currentColor;">OUTPUT</div><div style="position:absolute;left:952px;top:1281px;font-family:'Liberation Sans', sans-serif;font-size:21.5px;line-height:28px;color:#969696;font-weight:normal;white-space:pre;-webkit-text-stroke:0.3px currentColor;">PORTS</div><div style="position:absolute;left:1075px;top:1281px;font-family:'Liberation Sans', sans-serif;font-size:21.5px;line-height:28px;color:#e7e7e7;font-weight:normal;white-space:pre;-webkit-text-stroke:0.3px currentColor;">TERMINAL</div><div style="position:absolute;left:1070px;top:1323px;width:118px;height:2px;background:#e7e7e7;"></div><div style="position:absolute;left:1234px;top:1281px;font-family:'Liberation Sans', sans-serif;font-size:21.5px;line-height:28px;color:#969696;font-weight:normal;white-space:pre;-webkit-text-stroke:0.3px currentColor;">DEBUG CONSOLE</div><svg style="position:absolute;left:2562px;top:1279px;" width="30" height="30" viewBox="0 0 30 30"><rect x="1.2" y="1.2" width="27.6" height="27.6" rx="2.5" fill="none" stroke="#cccccc" stroke-width="2"/><path d="M10 8.5 L16.5 15 L10 21.5" fill="none" stroke="#cccccc" stroke-width="2"/></svg><div style="position:absolute;left:2602px;top:1281px;font-family:'Liberation Sans', sans-serif;font-size:24px;line-height:28px;color:#cca700;font-weight:normal;white-space:pre;-webkit-text-stroke:0.3px currentColor;">bash</div><svg style="position:absolute;left:2661px;top:1279px;" width="30" height="28" viewBox="0 0 30 28"><path d="M15 2 L28.5 26 H1.5 Z" fill="none" stroke="#cca700" stroke-width="2.2" stroke-linejoin="round"/><path d="M15 9.5 V18" stroke="#cca700" stroke-width="2.6"/><circle cx="15" cy="21.8" r="1.5" fill="#cca700"/></svg><svg style="position:absolute;left:2713px;top:1279px;" width="28" height="28" viewBox="0 0 28 28"><path d="M14 1 V27 M1 14 H27" stroke="#cccccc" stroke-width="2"/></svg><svg style="position:absolute;left:2751px;top:1288px;" width="18" height="12" viewBox="0 0 18 12"><path d="M1.5 1.5 L9 9 L16.5 1.5" fill="none" stroke="#cccccc" stroke-width="1.8"/></svg><svg style="position:absolute;left:2793px;top:1279px;" width="28" height="28" viewBox="0 0 28 28"><rect x="1.2" y="1.2" width="25.6" height="25.6" rx="2.5" fill="none" stroke="#cccccc" stroke-width="2"/><path d="M14 1.5 V26.5" stroke="#cccccc" stroke-width="2"/></svg><svg style="position:absolute;left:2845px;top:1279px;" width="24" height="28" viewBox="0 0 24 28"><path d="M1 5 H23 M8 5 V2 H16 V5 M3.5 5 L5 25.5 a1.5 1.5 0 0 0 1.5 1.3 H17.5 a1.5 1.5 0 0 0 1.5 -1.3 L20.5 5 M9 9.5 V22.5 M12 9.5 V22.5 M15 9.5 V22.5" fill="none" stroke="#cccccc" stroke-width="2"/></svg><svg style="position:absolute;left:2899px;top:1284px;" width="22" height="14" viewBox="0 0 22 14"><path d="M1.5 12 L11 2.5 L20.5 12" fill="none" stroke="#cccccc" stroke-width="2"/></svg><svg style="position:absolute;left:2944px;top:1282px;" width="20" height="20" viewBox="0 0 20 20"><path d="M1.5 1.5 L18.5 18.5 M18.5 1.5 L1.5 18.5" stroke="#cccccc" stroke-width="2"/></svg><svg style="position:absolute;left:2929px;top:1365px;" width="30" height="28" viewBox="0 0 30 28"><path d="M15 2 L28.5 26 H1.5 Z" fill="none" stroke="#cccccc" stroke-width="2.2" stroke-linejoin="round"/><path d="M15 9.5 V18" stroke="#cccccc" stroke-width="2.6"/><circle cx="15" cy="21.8" r="1.5" fill="#cccccc"/></svg><div style="position:absolute;left:588px;top:1353px;font-family:'Liberation Mono', monospace;font-size:23.33px;line-height:28px;white-space:pre;"><span style="color:#23d18b;font-weight:bold;">jrenteri@labradoodle</span><span style="color:#cccccc;">:</span><span style="color:#3b8eea;font-weight:bold;">~/cs3/project00-eagle</span><span style="color:#cccccc;">$</span><span style="color:#cccccc;"> clang task0-wc.c</span></div><div style="position:absolute;left:588px;top:1381px;font-family:'Liberation Mono', monospace;font-size:23.33px;line-height:28px;white-space:pre;"><span style="color:#cccccc;font-weight:bold;">task0-wc.c:3:9: </span><span style="color:#d670d6;font-weight:bold;">warning: </span><span style="color:#cccccc;font-weight:bold;">implicitly declaring library function &#x27;printf&#x27; with type &#x27;int (const char *, ...)&#x27; [-Wimplicit-function-declaration]</span></div><div style="position:absolute;left:588px;top:1409px;font-family:'Liberation Mono', monospace;font-size:23.33px;line-height:28px;white-space:pre;"><span style="color:#cccccc;">        printf(&quot;Usage: %s &lt;filename&gt;\n&quot;, argv[0]);</span></div><div style="position:absolute;left:588px;top:1437px;font-family:'Liberation Mono', monospace;font-size:23.33px;line-height:28px;white-space:pre;"><span style="color:#23d18b;font-weight:bold;">        ^</span></div><div style="position:absolute;left:588px;top:1465px;font-family:'Liberation Mono', monospace;font-size:23.33px;line-height:28px;white-space:pre;"><span style="color:#cccccc;font-weight:bold;">task0-wc.c:3:9: </span><span style="color:#666666;font-weight:bold;">note: </span><span style="color:#cccccc;">include the header &lt;stdio.h&gt; or explicitly provide a declaration for &#x27;printf&#x27;</span></div><div style="position:absolute;left:588px;top:1493px;font-family:'Liberation Mono', monospace;font-size:23.33px;line-height:28px;white-space:pre;"><span style="color:#cccccc;">1 warning generated.</span></div><div style="position:absolute;left:588px;top:1521px;font-family:'Liberation Mono', monospace;font-size:23.33px;line-height:28px;white-space:pre;"><span style="color:#23d18b;font-weight:bold;">jrenteri@labradoodle</span><span style="color:#cccccc;">:</span><span style="color:#3b8eea;font-weight:bold;">~/cs3/project00-eagle</span><span style="color:#cccccc;">$</span><span style="color:#cccccc;"> clang task0-wc.c</span></div><div style="position:absolute;left:588px;top:1549px;font-family:'Liberation Mono', monospace;font-size:23.33px;line-height:28px;white-space:pre;"><span style="color:#23d18b;font-weight:bold;">jrenteri@labradoodle</span><span style="color:#cccccc;">:</span><span style="color:#3b8eea;font-weight:bold;">~/cs3/project00-eagle</span><span style="color:#cccccc;">$</span></div><svg style="position:absolute;left:130px;top:1640px;" width="30" height="34" viewBox="0 0 30 34"><g fill="none" stroke="#ffffff" stroke-width="2"><path d="M8 12.5 L15.5 20 L8 28.5"/><path d="M24 6 L16 13.5 L24 21"/></g></svg><div style="position:absolute;left:167px;top:1641px;font-family:'Liberation Sans', sans-serif;font-size:25.2px;line-height:32px;color:#ffffff;font-weight:normal;white-space:pre;-webkit-text-stroke:0.3px currentColor;">SSH: labradoodle.caltech.edu</div><svg style="position:absolute;left:538px;top:1643px;" width="26" height="30" viewBox="0 0 26 30"><g fill="none" stroke="#ffffff" stroke-width="2"><circle cx="6" cy="4.5" r="3.3"/><circle cx="6" cy="25.5" r="3.3"/><circle cx="20" cy="9.5" r="3.3"/><path d="M6 7.8 V22.2 M20 12.8 C20 17.5 13 16.5 8.5 20"/></g></svg><div style="position:absolute;left:573px;top:1642px;font-family:'Liberation Sans', sans-serif;font-size:24px;line-height:32px;color:#ffffff;font-weight:normal;white-space:pre;-webkit-text-stroke:0.3px currentColor;">master*</div><svg style="position:absolute;left:692px;top:1643px;" width="30" height="30" viewBox="0 0 30 30"><g fill="none" stroke="#ffffff" stroke-width="2"><path d="M6.2 10.2 A10.5 10.5 0 0 1 25.2 11.6"/><path d="M21.8 12 L25.4 15.4 L29 12"/><path d="M24 19.6 A10.5 10.5 0 0 1 5.6 18.6"/><path d="M1.6 18.4 L5 15 L8.6 18.6"/></g></svg><svg style="position:absolute;left:754px;top:1645px;" width="27" height="27" viewBox="0 0 27 27"><g fill="none" stroke="#ffffff" stroke-width="2"><circle cx="13.5" cy="13.5" r="11.8"/><path d="M8.5 8.5 L18.5 18.5 M18.5 8.5 L8.5 18.5"/></g></svg><div style="position:absolute;left:789px;top:1642px;font-family:'Liberation Sans', sans-serif;font-size:24px;line-height:32px;color:#ffffff;font-weight:normal;white-space:pre;-webkit-text-stroke:0.3px currentColor;">5</div><svg style="position:absolute;left:811px;top:1645px;" width="26" height="24" viewBox="0 0 26 24"><path d="M13 1.5 L24.8 22.5 H1.2 Z" fill="none" stroke="#ffffff" stroke-width="2" stroke-linejoin="round"/><path d="M13 8.5 V15.5" stroke="#ffffff" stroke-width="2.4"/><circle cx="13" cy="18.8" r="1.4" fill="#ffffff"/></svg><div style="position:absolute;left:845px;top:1642px;font-family:'Liberation Sans', sans-serif;font-size:24px;line-height:32px;color:#ffffff;font-weight:normal;white-space:pre;-webkit-text-stroke:0.3px currentColor;">0</div><svg style="position:absolute;left:894px;top:1644px;" width="26" height="30" viewBox="0 0 26 30"><g fill="none" stroke="#ffffff" stroke-width="2"><path d="M4.5 2.5 C0.8 6.5 0.8 12.5 4.5 16.5 M21.5 2.5 C25.2 6.5 25.2 12.5 21.5 16.5 M8.5 5.5 C6.5 8 6.5 11 8.5 13.5 M17.5 5.5 C19.5 8 19.5 11 17.5 13.5"/><circle cx="13" cy="9.5" r="2"/><path d="M13 11.5 L7 28.5 M13 11.5 L19 28.5 M9 22 H17"/></g></svg><div style="position:absolute;left:927px;top:1642px;font-family:'Liberation Sans', sans-serif;font-size:24px;line-height:32px;color:#ffffff;font-weight:normal;white-space:pre;-webkit-text-stroke:0.3px currentColor;">0</div><svg style="position:absolute;left:973px;top:1643px;" width="30" height="30" viewBox="0 0 30 30"><g fill="none" stroke="#ffffff" stroke-width="2" stroke-linejoin="round"><path d="M1.5 19 C2.5 12 7.5 8.5 16 8.3 V3 L28.5 11.5 L16 20 V15 C9.5 15 5 16 1.5 19 Z"/><circle cx="11.5" cy="23.5" r="4"/></g></svg><div style="position:absolute;left:1009px;top:1642px;font-family:'Liberation Sans', sans-serif;font-size:24px;line-height:32px;color:#ffffff;font-weight:normal;white-space:pre;-webkit-text-stroke:0.3px currentColor;">Live Share</div><div style="position:absolute;left:2248px;top:1642px;font-family:'Liberation Sans', sans-serif;font-size:24px;line-height:32px;color:#ffffff;font-weight:normal;white-space:pre;-webkit-text-stroke:0.3px currentColor;">Ln 13, Col 19</div><div style="position:absolute;left:2424px;top:1642px;font-family:'Liberation Sans', sans-serif;font-size:24px;line-height:32px;color:#ffffff;font-weight:normal;white-space:pre;-webkit-text-stroke:0.3px currentColor;">Spaces: 4</div><div style="position:absolute;left:2569px;top:1642px;font-family:'Liberation Sans', sans-serif;font-size:24px;line-height:32px;color:#ffffff;font-weight:normal;white-space:pre;-webkit-text-stroke:0.3px currentColor;">UTF-8</div><div style="position:absolute;left:2674px;top:1642px;font-family:'Liberation Sans', sans-serif;font-size:24px;line-height:32px;color:#ffffff;font-weight:normal;white-space:pre;-webkit-text-stroke:0.3px currentColor;">LF</div><div style="position:absolute;left:2733px;top:1642px;font-family:'Liberation Sans', sans-serif;font-size:24px;line-height:32px;color:#ffffff;font-weight:normal;white-space:pre;-webkit-text-stroke:0.3px currentColor;">C</div><div style="position:absolute;left:2783px;top:1642px;font-family:'Liberation Sans', sans-serif;font-size:24px;line-height:32px;color:#ffffff;font-weight:normal;white-space:pre;-webkit-text-stroke:0.3px currentColor;">Linux</div><svg style="position:absolute;left:2874px;top:1645px;" width="28" height="26" viewBox="0 0 28 26"><g fill="none" stroke="#ffffff" stroke-width="2"><circle cx="9" cy="10" r="4.5"/><path d="M1.5 24.5 C2 19 5 16.5 9 16.5 C13 16.5 16 19 16.5 24.5"/><path d="M12 2 H26.5 V13 H20 L16.5 16.5 V13"/><path d="M17.5 6.5 L19.5 9 L23.5 5"/></g></svg><svg style="position:absolute;left:2936px;top:1644px;" width="24" height="28" viewBox="0 0 24 28"><g fill="none" stroke="#ffffff" stroke-width="2"><path d="M12 2.5 C7 2.5 4.5 6.5 4.5 11 V17.5 L1.5 21.5 H22.5 L19.5 17.5 V11 C19.5 6.5 17 2.5 12 2.5 Z"/><path d="M9 24.5 C9.5 26.5 14.5 26.5 15 24.5"/></g></svg>
</div>
</body></html>
